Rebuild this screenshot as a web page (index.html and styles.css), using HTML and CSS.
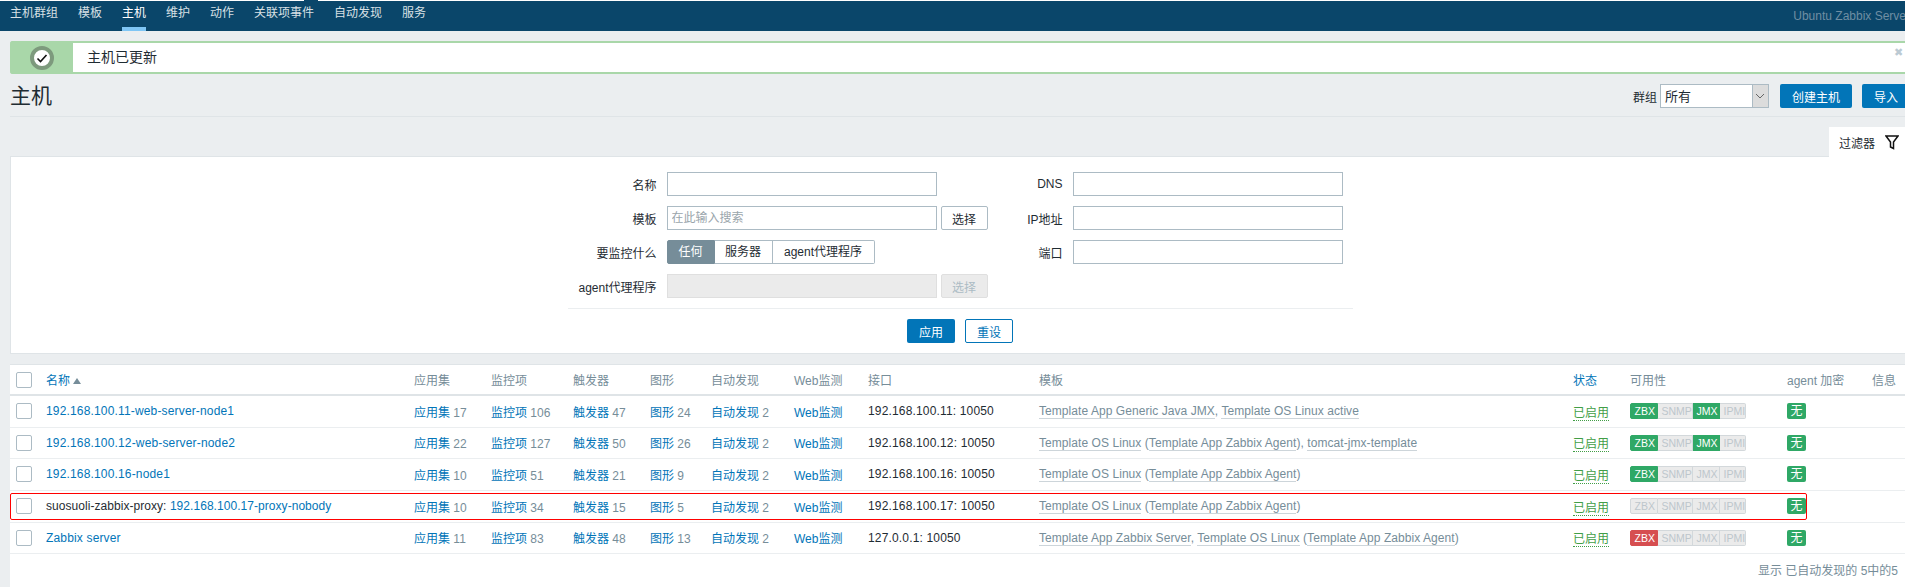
FILE: index.html
```html
<!DOCTYPE html>
<html lang="zh-CN">
<head>
    <meta charset="UTF-8">
    <title>主机</title>
    <link rel="stylesheet" href="styles.css">
</head>
<body>
<div class="page">
    <div class="topnav">
        <a href="#">主机群组</a>
        <a href="#">模板</a>
        <a href="#" class="active">主机</a>
        <a href="#">维护</a>
        <a href="#">动作</a>
        <a href="#">关联项事件</a>
        <a href="#">自动发现</a>
        <a href="#">服务</a>
        <span class="server-name">Ubuntu Zabbix Server</span>
    </div>

    <div class="content">
        <div class="msg">
            <div class="msg-icon">
                <svg width="24" height="24" viewBox="0 0 24 24">
                    <circle cx="12" cy="12" r="10" fill="#fff" stroke="#7d9a7d" stroke-width="4"/>
                    <path d="M7.5 12.5l3 3 6-6.5" fill="none" stroke="#111" stroke-width="1.6"/>
                </svg>
            </div>
            <div class="msg-text">主机已更新</div>
            <span class="msg-close">✖</span>
        </div>

        <div class="header">
            <h1>主机</h1>
            <div class="header-controls">
                <span>群组</span>
                <div class="select">
                    <span class="select-value">所有</span>
                    <span class="select-arrow">
                        <svg width="10" height="6" viewBox="0 0 10 6"><path d="M1 1l4 4 4-4" fill="none" stroke="#666" stroke-width="1"/></svg>
                    </span>
                </div>
                <button class="btn btn-create">创建主机</button>
                <button class="btn">导入</button>
            </div>
        </div>

        <div class="filter-tabs">
            <div class="filter-tab">
                过滤器
                <svg width="14" height="15" viewBox="0 0 14 15"><path d="M1 1h12L8.500 7v6.500L5.500 12V7z" fill="#fff" stroke="#111" stroke-width="1.500"/></svg>
            </div>
        </div>

        <div class="filter">
            <div class="filter-form">
                <label>名称</label>
                <div class="field"><input type="text"></div>
                <label>DNS</label>
                <input type="text">

                <label>模板</label>
                <div class="field">
                    <input type="text" placeholder="在此输入搜索">
                    <button class="btn-sel">选择</button>
                </div>
                <label>IP地址</label>
                <input type="text">

                <label>要监控什么</label>
                <div class="segmented">
                    <span class="on seg-any">任何</span>
                    <span class="seg-server">服务器</span>
                    <span class="seg-agent">agent代理程序</span>
                </div>
                <label>端口</label>
                <input type="text">

                <label>agent代理程序</label>
                <div class="field">
                    <input type="text" disabled>
                    <button class="btn-sel" disabled>选择</button>
                </div>
            </div>
            <div class="filter-buttons">
                <button class="btn btn-apply">应用</button>
                <button class="btn-reset">重设</button>
            </div>
        </div>

        <div class="list">
            <table>
                <colgroup>
                    <col class="c-check"><col class="c-name"><col class="c-apps"><col class="c-items">
                    <col class="c-triggers"><col class="c-graphs"><col class="c-disc"><col class="c-web">
                    <col class="c-iface"><col class="c-tpl"><col class="c-status"><col class="c-avail">
                    <col class="c-enc"><col class="c-info">
                </colgroup>
                <thead>
                    <tr>
                        <th class="check"><span class="box"></span></th>
                        <th><a href="#">名称</a><span class="sort-up"></span></th>
                        <th>应用集</th>
                        <th>监控项</th>
                        <th>触发器</th>
                        <th>图形</th>
                        <th>自动发现</th>
                        <th>Web监测</th>
                        <th>接口</th>
                        <th>模板</th>
                        <th><a href="#">状态</a></th>
                        <th>可用性</th>
                        <th>agent 加密</th>
                        <th>信息</th>
                    </tr>
                </thead>
                <tbody>
                    <tr>
                        <td class="check"><span class="box"></span></td>
                        <td class="wide"><a href="#">192.168.100.11-web-server-node1</a></td>
                        <td><a href="#">应用集</a> <sup>17</sup></td>
                        <td><a href="#">监控项</a> <sup>106</sup></td>
                        <td><a href="#">触发器</a> <sup>47</sup></td>
                        <td><a href="#">图形</a> <sup>24</sup></td>
                        <td><a href="#">自动发现</a> <sup>2</sup></td>
                        <td><a href="#">Web监测</a></td>
                        <td class="wide">192.168.100.11: 10050</td>
                        <td class="tpl"><a href="#">Template App Generic Java JMX</a>, <a href="#">Template OS Linux active</a></td>
                        <td><a href="#" class="enabled">已启用</a></td>
                        <td>
                            <div class="avail"><span class="ok">ZBX</span><span>SNMP</span><span class="ok">JMX</span><span>IPMI</span></div>
                        </td>
                        <td><span class="none">无</span></td>
                        <td></td>
                    </tr>
                    <tr>
                        <td class="check"><span class="box"></span></td>
                        <td class="wide"><a href="#">192.168.100.12-web-server-node2</a></td>
                        <td><a href="#">应用集</a> <sup>22</sup></td>
                        <td><a href="#">监控项</a> <sup>127</sup></td>
                        <td><a href="#">触发器</a> <sup>50</sup></td>
                        <td><a href="#">图形</a> <sup>26</sup></td>
                        <td><a href="#">自动发现</a> <sup>2</sup></td>
                        <td><a href="#">Web监测</a></td>
                        <td class="wide">192.168.100.12: 10050</td>
                        <td class="tpl"><a href="#">Template OS Linux</a> (<a href="#">Template App Zabbix Agent</a>), <a href="#">tomcat-jmx-template</a></td>
                        <td><a href="#" class="enabled">已启用</a></td>
                        <td>
                            <div class="avail"><span class="ok">ZBX</span><span>SNMP</span><span class="ok">JMX</span><span>IPMI</span></div>
                        </td>
                        <td><span class="none">无</span></td>
                        <td></td>
                    </tr>
                    <tr>
                        <td class="check"><span class="box"></span></td>
                        <td class="wide"><a href="#">192.168.100.16-node1</a></td>
                        <td><a href="#">应用集</a> <sup>10</sup></td>
                        <td><a href="#">监控项</a> <sup>51</sup></td>
                        <td><a href="#">触发器</a> <sup>21</sup></td>
                        <td><a href="#">图形</a> <sup>9</sup></td>
                        <td><a href="#">自动发现</a> <sup>2</sup></td>
                        <td><a href="#">Web监测</a></td>
                        <td class="wide">192.168.100.16: 10050</td>
                        <td class="tpl"><a href="#">Template OS Linux</a> (<a href="#">Template App Zabbix Agent</a>)</td>
                        <td><a href="#" class="enabled">已启用</a></td>
                        <td>
                            <div class="avail"><span class="ok">ZBX</span><span>SNMP</span><span>JMX</span><span>IPMI</span></div>
                        </td>
                        <td><span class="none">无</span></td>
                        <td></td>
                    </tr>
                    <tr>
                        <td class="check"><span class="box"></span></td>
                        <td class="proxy-name">suosuoli-zabbix-proxy: <a href="#">192.168.100.17-proxy-nobody</a></td>
                        <td><a href="#">应用集</a> <sup>10</sup></td>
                        <td><a href="#">监控项</a> <sup>34</sup></td>
                        <td><a href="#">触发器</a> <sup>15</sup></td>
                        <td><a href="#">图形</a> <sup>5</sup></td>
                        <td><a href="#">自动发现</a> <sup>2</sup></td>
                        <td><a href="#">Web监测</a></td>
                        <td class="wide">192.168.100.17: 10050</td>
                        <td class="tpl"><a href="#">Template OS Linux</a> (<a href="#">Template App Zabbix Agent</a>)</td>
                        <td><a href="#" class="enabled">已启用</a></td>
                        <td>
                            <div class="avail"><span>ZBX</span><span>SNMP</span><span>JMX</span><span>IPMI</span></div>
                        </td>
                        <td><span class="none">无</span></td>
                        <td></td>
                    </tr>
                    <tr>
                        <td class="check"><span class="box"></span></td>
                        <td class="wide"><a href="#">Zabbix server</a></td>
                        <td><a href="#">应用集</a> <sup>11</sup></td>
                        <td><a href="#">监控项</a> <sup>83</sup></td>
                        <td><a href="#">触发器</a> <sup>48</sup></td>
                        <td><a href="#">图形</a> <sup>13</sup></td>
                        <td><a href="#">自动发现</a> <sup>2</sup></td>
                        <td><a href="#">Web监测</a></td>
                        <td class="wide">127.0.0.1: 10050</td>
                        <td class="tpl"><a href="#">Template App Zabbix Server</a>, <a href="#">Template OS Linux</a> (<a href="#">Template App Zabbix Agent</a>)</td>
                        <td><a href="#" class="enabled">已启用</a></td>
                        <td>
                            <div class="avail"><span class="bad">ZBX</span><span>SNMP</span><span>JMX</span><span>IPMI</span></div>
                        </td>
                        <td><span class="none">无</span></td>
                        <td></td>
                    </tr>
                </tbody>
            </table>
            <div class="list-footer">显示 已自动发现的 5中的5</div>
            <div class="red-mark"></div>
        </div>
    </div>
</div>
</body>
</html>
```

FILE: styles.css
```css
html, body {
    margin: 0;
    height: 100%;
    overflow: hidden;
    background-color: #ebeef0;
}
body {
    font-family: "Liberation Sans", "Noto Sans CJK SC", sans-serif;
    font-size: 12px;
    color: #1f2c33;
}
a {
    color: #0275b8;
    text-decoration: none;
}
button, input {
    font-family: inherit;
    font-size: 12px;
}
.page {
    width: 1920px;
    background-color: #fff;
    padding-top: 1px;
}

/* top menu */
.topnav {
    position: relative;
    display: flex;
    height: 30px;
    padding-left: 10px;
    gap: 20px;
    background-color: #0a466a;
}
.topnav::before {
    content: "";
    position: absolute;
    top: -1px;
    left: 304px;
    width: 14px;
    height: 1px;
    background-color: #0a466a;
}
.topnav a {
    color: #d8e0e5;
    line-height: 25px;
    height: 26px;
}
.topnav a.active {
    color: #fff;
    border-bottom: 4px solid #7fc6f5;
}
.server-name {
    margin-left: auto;
    margin-right: 10px;
    line-height: 30px;
    color: #6f8ea3;
}

.content {
    padding: 10px 10px 0;
    background-color: #ebeef0;
    height: 546px;
    box-sizing: content-box;
}

/* message */
.msg {
    position: relative;
    display: flex;
    height: 33px;
    box-sizing: border-box;
    border: solid #a9d7a9;
    border-width: 2px 0;
    background-color: #fff;
    border-radius: 3px 0 0 3px;
}
.msg-icon {
    display: flex;
    align-items: center;
    justify-content: center;
    width: 63px;
    margin: -2px 0;
    background-color: #a9d7a9;
    border-radius: 3px 0 0 3px;
}
.msg-text {
    margin-left: 14px;
    font-size: 14px;
    line-height: 29px;
}
.msg-close {
    position: absolute;
    top: 3px;
    left: 1884px;
    font-size: 11px;
    color: #bccad3;
}

/* page title */
.header {
    display: flex;
    justify-content: space-between;
    height: 42px;
    border-bottom: 1px solid #dfe4e7;
}
h1 {
    margin: 8px 0 0;
    font-size: 21px;
    font-weight: normal;
    line-height: 28px;
}
.header-controls {
    display: flex;
    align-items: center;
    align-self: flex-start;
    margin-top: 10px;
    height: 24px;
}
.select {
    display: flex;
    width: 109px;
    height: 24px;
    box-sizing: border-box;
    margin-left: 3px;
    border: 1px solid #acbbc4;
    border-right-width: 0;
    background-color: #fff;
}
.select-value {
    flex: 1;
    padding-left: 4px;
    line-height: 24px;
    font-size: 13px;
}
.select-arrow {
    display: flex;
    align-items: center;
    justify-content: center;
    width: 17px;
    margin-top: -1px;
    margin-bottom: -1px;
    box-sizing: border-box;
    border: 1px solid #acbbc4;
    background-color: #dcdcdc;
}
.btn {
    height: 24px;
    padding: 0 12px;
    border: 0;
    border-radius: 2px;
    color: #fff;
    background-color: #0275b8;
}
.btn-create {
    margin: 0 10px 0 11px;
}

/* filter */
.filter-tabs {
    display: flex;
    justify-content: flex-end;
    margin-top: 10px;
}
.filter-tab {
    display: flex;
    align-items: center;
    gap: 10px;
    height: 30px;
    width: 81px;
    box-sizing: border-box;
    padding-left: 10px;
    background-color: #fff;
    position: relative;
    z-index: 1;
}
.filter {
    height: 198px;
    box-sizing: border-box;
    margin-top: -1px;
    padding-top: 15px;
    border: 1px solid #dfe4e7;
    background-color: #fff;
}
.filter-form {
    display: grid;
    grid-template-columns: 89px 321px 65px 270px;
    grid-auto-rows: 24px;
    column-gap: 10px;
    row-gap: 10px;
    align-items: center;
    width: 785px;
    box-sizing: border-box;
    margin: 0 auto;
    padding-bottom: 10px;
    border-bottom: 1px solid #ebeef0;
}
.filter-form label {
    text-align: right;
}
input {
    width: 270px;
    height: 24px;
    box-sizing: border-box;
    margin: 0;
    padding: 0 4px;
    border: 1px solid #acbbc4;
    background-color: #fff;
    color: #1f2c33;
}
input::placeholder {
    color: #9aa5ab;
}
input:disabled {
    background-color: #ebebeb;
    border-color: #dfdfdf;
}
.field {
    display: flex;
    gap: 4px;
}
.btn-sel {
    width: 47px;
    height: 24px;
    padding: 0;
    border: 1px solid #acbbc4;
    border-radius: 2px;
    background-color: #fff;
    color: #1f2c33;
}
.btn-sel:disabled {
    background-color: #ebebeb;
    border-color: #dfdfdf;
    color: #acbbc4;
}
.segmented {
    display: flex;
    height: 24px;
}
.segmented span {
    box-sizing: border-box;
    line-height: 22px;
    text-align: center;
    border: 1px solid #acbbc4;
    border-left-width: 0;
    background-color: #fff;
}
.segmented .on {
    border: 1px solid #768d99;
    background-color: #768d99;
    color: #fff;
    border-radius: 2px 0 0 2px;
}
.seg-any {
    width: 48px;
}
.seg-server {
    width: 58px;
}
.segmented .seg-agent {
    width: 102px;
    border-radius: 0 2px 2px 0;
}
.filter-buttons {
    display: flex;
    justify-content: center;
    gap: 10px;
    margin-top: 10px;
}
.btn-apply {
    width: 48px;
}
.btn-reset {
    width: 48px;
    height: 24px;
    padding: 0;
    border: 1px solid #0275b8;
    border-radius: 2px;
    background-color: #fff;
    color: #0275b8;
}

/* host list */
.list {
    position: relative;
    margin-top: 10px;
    background-color: #fff;
    height: 222px;
    border-bottom: 1px solid #dfe4e7;
    border-top: 1px solid #dfe4e7;
}
table {
    width: 1900px;
    table-layout: fixed;
    border-collapse: separate;
    border-spacing: 0;
}
.c-check { width: 36px; }
.c-name { width: 368px; }
.c-apps { width: 77px; }
.c-items { width: 82px; }
.c-triggers { width: 77px; }
.c-graphs { width: 61px; }
.c-disc { width: 83px; }
.c-web { width: 74px; }
.c-iface { width: 171px; }
.c-tpl { width: 534px; }
.c-status { width: 57px; }
.c-avail { width: 157px; }
.c-enc { width: 85px; }
.c-info { width: 38px; }
th, td {
    padding: 0;
    text-align: left;
    white-space: nowrap;
}
th {
    height: 29px;
    font-weight: normal;
    color: #768d99;
    border-bottom: 2px solid #dfe4e7;
}
td {
    height: 30px;
    padding-bottom: 1px;
    border-bottom: 1px solid #ebeef0;
}
tbody tr:nth-child(3n+2) td {
    height: 29px;
}
.wide {
    letter-spacing: 0.16px;
}
.proxy-name {
    letter-spacing: 0.05px;
}
.check {
    padding-left: 6px;
    line-height: 0;
}
.box {
    display: inline-block;
    width: 16px;
    height: 16px;
    box-sizing: border-box;
    border: 1px solid #acbbc4;
    border-radius: 2px;
    background-color: #fff;
}
.sort-up {
    display: inline-block;
    margin-left: 3px;
    margin-bottom: 1px;
    border: solid transparent;
    border-width: 0 4px 6px;
    border-bottom-color: #768d99;
}
sup {
    vertical-align: baseline;
    font-size: 12px;
    color: #768d99;
}
.tpl {
    color: #768d99;
    letter-spacing: 0.06px;
}
.tpl a {
    color: #768d99;
    border-bottom: 1px solid #cdd5da;
}
.enabled {
    color: #429e47;
    border-bottom: 1px dotted #429e47;
}
.avail {
    display: inline-flex;
    height: 16px;
    vertical-align: middle;
}
.avail span {
    height: 16px;
    box-sizing: border-box;
    padding: 0 3.5px;
    font-size: 10.5px;
    line-height: 15px;
    text-align: center;
    color: #bdc6cc;
    background-color: #ebebeb;
    border: 1px solid #d3d8db;
    border-left-width: 0;
}
.avail span:first-child {
    width: 28px;
    border-left-width: 1px;
    border-radius: 2px 0 0 2px;
}
.avail span:nth-child(2) {
    width: 35px;
}
.avail span:nth-child(3) {
    width: 27px;
}
.avail span:last-child {
    width: 26px;
    border-radius: 0 2px 2px 0;
}
.avail .ok {
    color: #fff;
    background-color: #2fa866;
    border-color: #2fa866;
}
.avail .bad {
    color: #fff;
    background-color: #d64e50;
    border-color: #d64e50;
}
.none {
    display: inline-block;
    width: 19px;
    height: 16px;
    line-height: 16px;
    text-align: center;
    vertical-align: middle;
    border-radius: 2px;
    color: #fff;
    background-color: #2fa866;
}
.list-footer {
    margin: 7px 12px 0 0;
    text-align: right;
    color: #768d99;
}
.red-mark {
    position: absolute;
    top: 128px;
    left: 0;
    width: 1795px;
    height: 25px;
    border: 1px solid #f00;
    border-radius: 2px;
}
```
